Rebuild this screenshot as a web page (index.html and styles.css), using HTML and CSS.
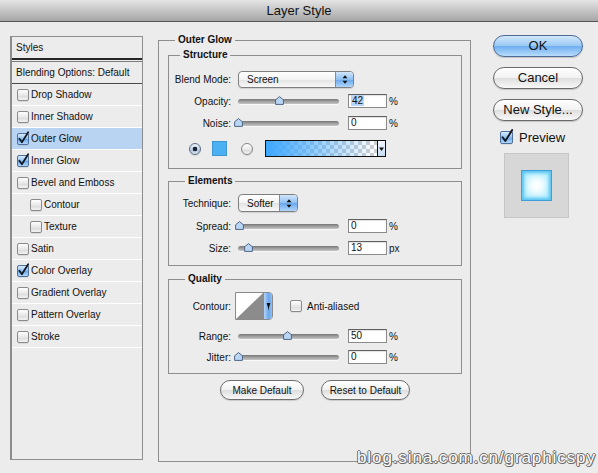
FILE: index.html
```html
<!DOCTYPE html>
<html>
<head>
<meta charset="utf-8">
<title>Layer Style</title>
<link rel="stylesheet" href="styles.css">
</head>
<body>
<div class="window">
  <div class="titlebar">Layer Style</div>
  <div class="main-area">
    <div class="styles-panel">
      <div class="sp-head">Styles</div>
      <div class="sp-blend">Blending Options: Default</div>
      <div class="sp-row"><span class="cb"></span>Drop Shadow</div>
      <div class="sp-row"><span class="cb"></span>Inner Shadow</div>
      <div class="sp-row sel"><span class="cb on"><svg viewBox="0 0 12 12" width="12" height="12"><path d="M2.4 5.8 L4.9 9.2 L11.2 -0.8" /></svg></span>Outer Glow</div>
      <div class="sp-row"><span class="cb on"><svg viewBox="0 0 12 12" width="12" height="12"><path d="M2.4 5.8 L4.9 9.2 L11.2 -0.8" /></svg></span>Inner Glow</div>
      <div class="sp-row"><span class="cb"></span>Bevel and Emboss</div>
      <div class="sp-row ind"><span class="cb"></span>Contour</div>
      <div class="sp-row ind"><span class="cb"></span>Texture</div>
      <div class="sp-row"><span class="cb"></span>Satin</div>
      <div class="sp-row"><span class="cb on"><svg viewBox="0 0 12 12" width="12" height="12"><path d="M2.4 5.8 L4.9 9.2 L11.2 -0.8" /></svg></span>Color Overlay</div>
      <div class="sp-row"><span class="cb"></span>Gradient Overlay</div>
      <div class="sp-row"><span class="cb"></span>Pattern Overlay</div>
      <div class="sp-row"><span class="cb"></span>Stroke</div>
    </div>

    <fieldset class="outer">
      <legend>Outer Glow</legend>
      <div class="outer-in">
        <fieldset class="sub structure">
          <legend>Structure</legend>
          <div class="in">
            <div class="row r17">
              <span class="lbl">Blend Mode:</span>
              <div class="popup w-screen"><span class="ptxt">Screen</span><span class="parr"><svg viewBox="0 0 8 11" width="8" height="11"><polygon points="1.5,4.2 4,1.2 6.5,4.2"/><polygon points="1.5,6.8 4,9.8 6.5,6.8"/></svg></span></div>
            </div>
            <div class="row r14 mt6">
              <span class="lbl">Opacity:</span>
              <div class="slider"><div class="track"></div><svg class="thumb" style="left:37px" viewBox="0 0 9 9" width="9" height="9"><path d="M4.5 0.6 L8.4 3.8 L8.4 8.4 L0.6 8.4 L0.6 3.8 Z"/></svg></div>
              <div class="num"><span class="hl">42</span></div><span class="unit">%</span>
            </div>
            <div class="row r14 mt8">
              <span class="lbl">Noise:</span>
              <div class="slider"><div class="track"></div><svg class="thumb" style="left:-4px" viewBox="0 0 9 9" width="9" height="9"><path d="M4.5 0.6 L8.4 3.8 L8.4 8.4 L0.6 8.4 L0.6 3.8 Z"/></svg></div>
              <div class="num">0</div><span class="unit">%</span>
            </div>
            <div class="row r17 mt10 colorrow">
              <span class="radio on"></span>
              <span class="swatch"></span>
              <span class="radio r2"></span>
              <span class="grad"></span><span class="gradarr"><svg viewBox="0 0 7 6" width="7" height="6"><polygon points="1,1.5 6,1.5 3.5,5"/></svg></span>
            </div>
          </div>
        </fieldset>

        <fieldset class="sub elements">
          <legend>Elements</legend>
          <div class="in">
            <div class="row r18">
              <span class="lbl">Technique:</span>
              <div class="popup w-tech"><span class="ptxt">Softer</span><span class="parr"><svg viewBox="0 0 8 11" width="8" height="11"><polygon points="1.5,4.2 4,1.2 6.5,4.2"/><polygon points="1.5,6.8 4,9.8 6.5,6.8"/></svg></span></div>
            </div>
            <div class="row r14 mt7">
              <span class="lbl">Spread:</span>
              <div class="slider"><div class="track"></div><svg class="thumb" style="left:-3px" viewBox="0 0 9 9" width="9" height="9"><path d="M4.5 0.6 L8.4 3.8 L8.4 8.4 L0.6 8.4 L0.6 3.8 Z"/></svg></div>
              <div class="num">0</div><span class="unit">%</span>
            </div>
            <div class="row r14 mt8">
              <span class="lbl">Size:</span>
              <div class="slider"><div class="track"></div><svg class="thumb" style="left:6px" viewBox="0 0 9 9" width="9" height="9"><path d="M4.5 0.6 L8.4 3.8 L8.4 8.4 L0.6 8.4 L0.6 3.8 Z"/></svg></div>
              <div class="num">13</div><span class="unit">px</span>
            </div>
          </div>
        </fieldset>

        <fieldset class="sub quality">
          <legend>Quality</legend>
          <div class="in">
            <div class="row r28">
              <span class="lbl lbl-c">Contour:</span>
              <div class="contour">
                <svg class="curve" viewBox="0 0 28 28" width="28" height="28" preserveAspectRatio="none"><rect x="0" y="0" width="28" height="28" fill="#fff"/><polygon points="0,28 28,0 28,28" fill="#8c8c8c"/></svg>
                <span class="carr"><svg viewBox="0 0 5 9" width="5" height="9"><polygon points="0.6,1 4.4,1 3.1,5 2.5,8.6 1.9,5"/></svg></span>
              </div>
              <span class="cb aa"></span><span class="aatxt">Anti-aliased</span>
            </div>
            <div class="row r14 mt9">
              <span class="lbl">Range:</span>
              <div class="slider"><div class="track"></div><svg class="thumb" style="left:45px" viewBox="0 0 9 9" width="9" height="9"><path d="M4.5 0.6 L8.4 3.8 L8.4 8.4 L0.6 8.4 L0.6 3.8 Z"/></svg></div>
              <div class="num">50</div><span class="unit">%</span>
            </div>
            <div class="row r14 mt7">
              <span class="lbl">Jitter:</span>
              <div class="slider"><div class="track"></div><svg class="thumb" style="left:-4px" viewBox="0 0 9 9" width="9" height="9"><path d="M4.5 0.6 L8.4 3.8 L8.4 8.4 L0.6 8.4 L0.6 3.8 Z"/></svg></div>
              <div class="num">0</div><span class="unit">%</span>
            </div>
          </div>
        </fieldset>

        <div class="defaults">
          <button class="sbtn w-make">Make Default</button>
          <button class="sbtn w-reset">Reset to Default</button>
        </div>
      </div>
    </fieldset>

    <div class="actions">
      <button class="abtn ok">OK</button>
      <button class="abtn">Cancel</button>
      <button class="abtn">New Style...</button>
      <div class="preview-row"><span class="cb big on"><svg viewBox="0 0 12 12" width="13" height="13"><path d="M2.4 5.8 L4.9 9.2 L11.2 -0.8" /></svg></span><span class="ptext">Preview</span></div>
      <div class="preview-box"><div class="glow"></div></div>
    </div>
  </div>
  <div class="watermark">blog.sina.com.cn/graphicspy</div>
</div>
</body>
</html>
```

FILE: styles.css
```css
* { box-sizing: border-box; }
html, body { margin: 0; padding: 0; }
body {
  width: 598px; height: 473px; overflow: hidden;
  background: #ececec;
  font-family: "Liberation Sans", Arial, sans-serif;
  font-size: 10px; color: #111;
}
.window { position: relative; width: 598px; height: 473px; background: #ececec; }

.titlebar {
  height: 22px; line-height: 21px;
  border-bottom: 1px solid #555;
  background: linear-gradient(#e4e4e4, #a6a6a6);
  text-align: center; font-size: 13px; color: #111;
}

.main-area { display: flex; align-items: flex-start; padding: 12px 0 0 10px; }

/* ---------- styles list ---------- */
.styles-panel {
  margin-top: 2px; width: 133px; height: 424px; flex: none;
  border: 1px solid #8d8d8d; border-left-width: 2px;
  background: #ececec;
}
.sp-head { height: 23px; line-height: 21px; padding-left: 4px; border-bottom: 2px solid #262626; }
.sp-blend {
  margin-top: 1px; height: 23px; line-height: 21px; padding-left: 4px;
  border-top: 1px solid #7d7d7d; border-bottom: 1px solid #4a4a4a;
  white-space: nowrap;
}
.sp-row {
  height: 22px; display: flex; align-items: center; padding-left: 5px;
  border-bottom: 1px solid #fff; white-space: nowrap;
}
.sp-row.sel { background: #b9d3f3; }
.sp-row.ind { padding-left: 18px; }

.cb {
  position: relative; flex: none; width: 12px; height: 12px; margin-right: 2px;
  border: 1px solid #8a8a8a; border-radius: 2px;
  background: linear-gradient(#ffffff, #e6e6e6 55%, #d9d9d9 56%, #f3f3f3);
  box-shadow: 0 1px 0 rgba(0,0,0,.07);
}
.cb.on {
  border-color: #4f6f9c;
  background: linear-gradient(#d9ebfc, #8fc0f1 50%, #66a6ec 51%, #b4d9fb);
}
.cb svg { position: absolute; left: -1px; top: -1px; overflow: visible; }
.cb svg path { fill: none; stroke: #151a22; stroke-width: 1.8; stroke-linecap: round; stroke-linejoin: round; }
.cb.big { width: 13px; height: 13px; }

/* ---------- fieldsets ---------- */
fieldset { margin: 0; padding: 0; border: 1px solid #8e8e8e; min-width: 0; }
legend { padding: 0 3px; font-weight: bold; font-size: 10px; line-height: 12px; color: #111; }
.outer { width: 313px; margin-left: 15px; flex: none; }
.outer > legend { margin-left: 16px; }
.outer-in { padding: 3px 8px 61px 9px; }
.structure > legend { margin-left: 11px; }
.elements > legend, .quality > legend { margin-left: 16px; }
.structure .in { padding: 10px 0 11px; }
.elements { margin-top: 6px; }
.elements .in { padding: 7px 0 10px; }
.quality { margin-top: 7px; }
.quality .in { padding: 7px 0 9px; }

.row { display: flex; align-items: center; white-space: nowrap; }
.r14 { height: 14px; }
.r17 { height: 17px; }
.r18 { height: 18px; }
.r28 { height: 28px; }
.mt6 { margin-top: 6px; }
.mt7 { margin-top: 7px; }
.mt8 { margin-top: 8px; }
.mt9 { margin-top: 9px; }
.mt10 { margin-top: 10px; }
.lbl { width: 62px; margin-right: 7px; text-align: right; flex: none; }
.lbl-c { margin-right: 4px; }

/* popups */
.popup {
  display: flex; height: 100%; flex: none;
  border: 1px solid #7f7f7f; border-radius: 4px; overflow: hidden;
  background: linear-gradient(#ffffff, #f2f2f2 50%, #e3e3e3 51%, #f8f8f8);
  box-shadow: 0 1px 1px rgba(0,0,0,.12);
}
.w-screen { width: 116px; }
.w-tech { width: 60px; }
.ptxt { flex: 1; padding-left: 8px; display: flex; align-items: center; }
.parr {
  width: 18px; flex: none; display: flex; align-items: center; justify-content: center;
  border-left: 1px solid #6f8fbd;
  background: linear-gradient(#d2e6fa, #8ebff2 50%, #69a7ec 51%, #b0d6fb);
}
.parr svg polygon { fill: #111; }

/* sliders */
.slider { position: relative; width: 101px; height: 14px; flex: none; }
.track {
  margin-top: 5px; height: 5px; border-radius: 3px;
  background: linear-gradient(#767676, #a9a9a9 60%, #c4c4c4);
  box-shadow: 0 1px 0 rgba(255,255,255,.7);
}
.thumb { position: absolute; top: 2px; }
.thumb path { fill: #b9d6f5; stroke: #4f6584; stroke-width: 1; }

.num {
  width: 39px; height: 14px; margin-left: 9px; flex: none;
  border: 1px solid #8a8a8a; border-top-color: #5f5f5f;
  background: #fff; box-shadow: inset 0 1px 1px rgba(0,0,0,.12);
  line-height: 12px; padding-left: 2px;
}
.hl { background: #b6d5fb; padding: 0 1px; }
.unit { margin-left: 2px; }

/* color row */
.colorrow { padding-left: 20px; }
.radio {
  width: 12px; height: 12px; border-radius: 50%; flex: none;
  border: 1px solid #858585;
  background: linear-gradient(#ffffff, #e9e9e9 55%, #d6d6d6 56%, #f4f4f4);
  box-shadow: 0 1px 1px rgba(0,0,0,.1);
}
.radio.on {
  border-color: #5d6f88;
  background: radial-gradient(circle, #1b2437 0 2px, transparent 2.6px), linear-gradient(#eef3f9, #c3d2e3 55%, #a9bdd4 56%, #dbe6f2);
}
.swatch { width: 15px; height: 15px; margin-left: 11px; flex: none; background: #4cb1f3; border: 1px solid #3f96d0; }
.radio.r2 { margin-left: 14px; }
.grad {
  width: 112px; height: 17px; margin-left: 12px; flex: none;
  border: 1px solid #111; border-right: none;
  background:
    linear-gradient(to right, rgba(61,167,255,1) 0%, rgba(61,167,255,0) 100%),
    repeating-conic-gradient(#cfcfcf 0 25%, #ffffff 0 50%) 0 0 / 8px 8px;
}
.gradarr {
  width: 9px; height: 17px; flex: none; display: flex; align-items: center; justify-content: center;
  border: 1px solid #111; background: linear-gradient(#f4f8fd, #c6dcf4);
}
.gradarr svg polygon { fill: #111; }

/* contour */
.contour {
  display: flex; width: 38px; height: 28px; flex: none;
  border: 1px solid #8a8a8a; border-radius: 0 4px 4px 0; overflow: hidden; background: #fff;
}
.contour .curve { flex: none; width: 27px; height: 26px; }
.carr {
  flex: 1; display: flex; align-items: center; justify-content: center;
  border-left: 1px solid #6f8fbd;
  background: linear-gradient(to right, #b2d4f8, #6aa7ec 60%, #8fc0f3);
}
.carr svg polygon { fill: #0e0e0e; }
.cb.aa { margin-left: 17px; margin-right: 5px; }

/* bottom buttons */
.defaults { display: flex; justify-content: center; gap: 17px; margin-top: 6px; }
button {
  font: inherit; color: #111; padding: 0; margin: 0; cursor: default;
  -webkit-appearance: none; appearance: none;
}
.sbtn {
  height: 20px; border: 1px solid #6e6e6e; border-radius: 10px;
  background: linear-gradient(#ffffff, #f1f1f1 50%, #dedede 51%, #f8f8f8);
  box-shadow: 0 1px 1px rgba(0,0,0,.15);
  font-size: 10px;
}
.w-make { width: 84px; }
.w-reset { width: 89px; }

/* right actions */
.actions { display: flex; flex-direction: column; width: 90px; margin-left: 22px; margin-top: 1px; flex: none; }
.abtn {
  height: 22px; border: 1px solid #6a6a6a; border-radius: 11px;
  background: linear-gradient(#ffffff, #f1f1f1 50%, #dedede 51%, #f8f8f8);
  box-shadow: 0 1px 1px rgba(0,0,0,.18);
  font-size: 13px; line-height: 20px;
}
.abtn + .abtn { margin-top: 10px; }
.abtn.ok {
  border-color: #4d6a96;
  background: linear-gradient(#d3e8fc, #98c8f4 50%, #6eaef0 51%, #b8dcfc);
}
.preview-row { display: flex; align-items: center; height: 16px; margin-top: 8px; padding-left: 7px; font-size: 13px; }
.ptext { margin-left: 4px; }
.preview-box {
  width: 65px; height: 65px; margin: 8px 0 0 11px;
  border: 1px solid #c6c6c6; background: #d7d7d7;
  display: flex; align-items: center; justify-content: center;
}
.glow {
  width: 31px; height: 31px;
  border: 1px solid #3f9fd8;
  background: #ffffff;
  box-shadow: inset 0 0 3px 2px #5cc4f0, inset 0 0 9px 5px #a6ebff;
}

/* watermark */
.watermark {
  position: absolute; left: 357px; top: 449px;
  font-family: "Liberation Sans", Arial, sans-serif;
  font-size: 17px; line-height: 17px; letter-spacing: 0.9px;
  color: #ffffff;
  text-shadow: 1px 0 #6a6a6a, -1px 0 #6a6a6a, 0 1px #6a6a6a, 0 -1px #6a6a6a, 1px 1px #8a8a8a;
  white-space: nowrap;
}
```
